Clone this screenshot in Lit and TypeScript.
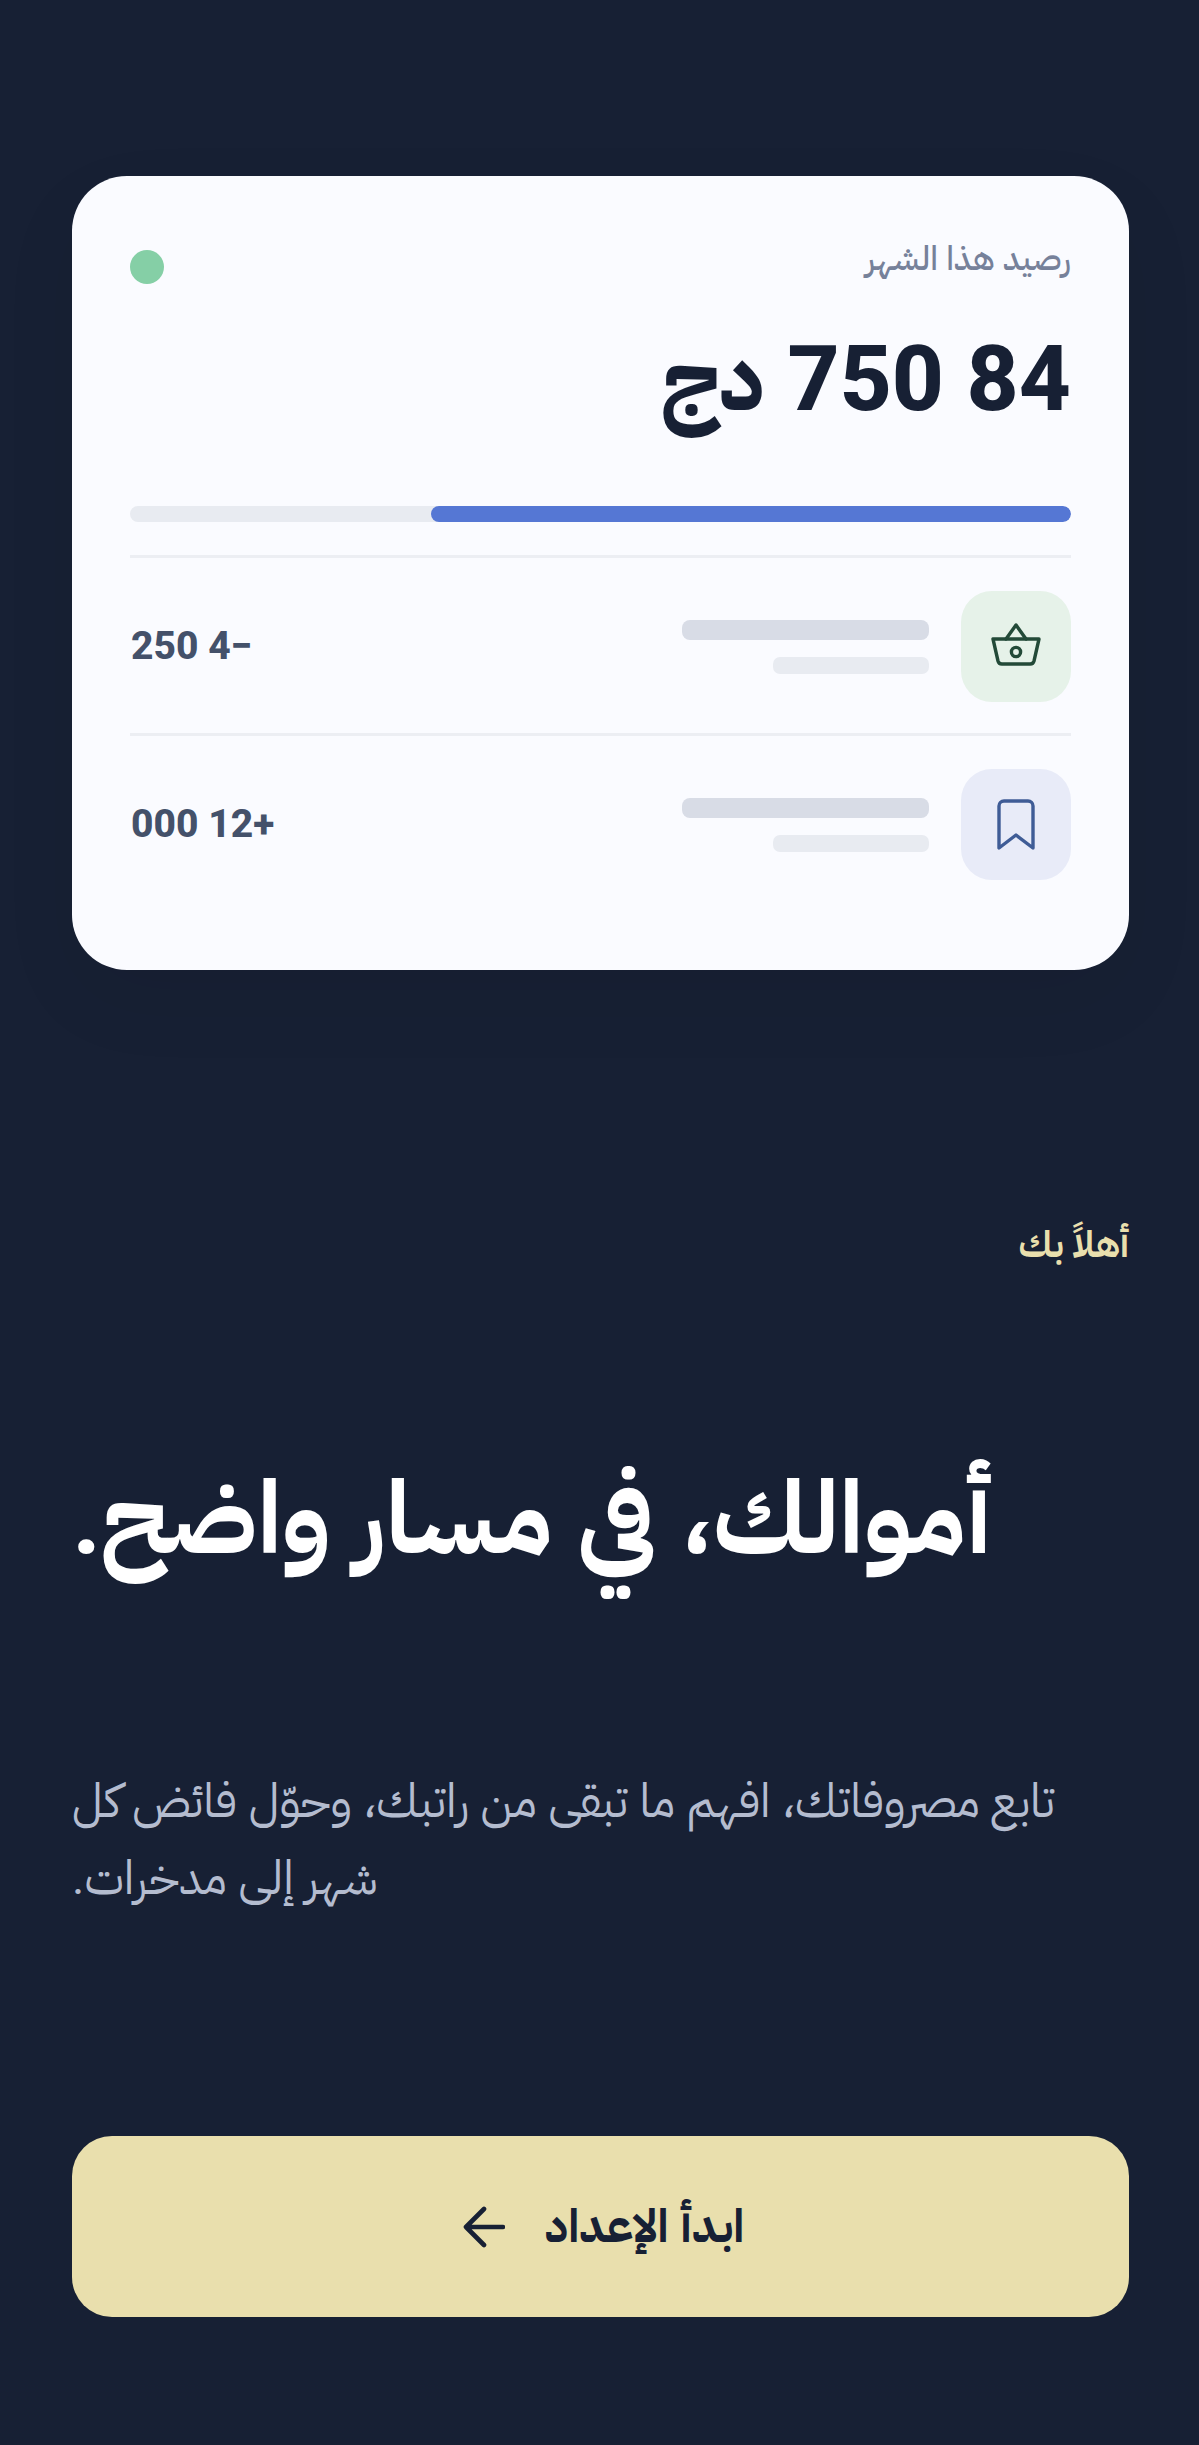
import { LitElement, html, css } from "lit";
import { customElement } from "lit/decorators.js";

@customElement("app-root")
export class AppRoot extends LitElement {
  static styles = css`
    :host { display: block; width: 1199px; height: 2445px; background: #172034; font-family: Roboto, "IBM Plex Sans Arabic", sans-serif; }
    .page { direction: rtl; box-sizing: border-box; height: 2445px; padding: 176px 70px 0 72px; display: flex; flex-direction: column; }
    .card { box-sizing: border-box; height: 794px; background: #fafbff; border-radius: 55px; padding: 58px 58px 0; box-shadow: 0 30px 80px rgba(0,0,0,.06); }
    .top { display: flex; justify-content: space-between; align-items: flex-start; height: 56px; }
    .label { font-size: 33.5px; font-weight: 500; line-height: 50px; color: #76819a; }
    .dot { width: 34px; height: 34px; border-radius: 50%; background: #85cfa6; margin-top: 16px; }
    .amount { margin-top: 34px; font-size: 90.5px; font-weight: 800; line-height: 110px; color: #172034; }
    .track { margin-top: 72px; height: 16px; border-radius: 8px; background: #e8ebf1; overflow: hidden; }
    .fill { height: 100%; width: 68%; border-radius: 8px; background: #5577d4; }
    .rule { height: 3px; background: #eceef3; margin-top: 33px; }
    .rule.flush { margin-top: 0; }
    .row { display: flex; align-items: center; padding: 33px 0 31px; }
    .ico { width: 110px; height: 111px; border-radius: 31px; display: flex; align-items: center; justify-content: center; flex: none; }
    .ico.green { background: #e6f2e9; color: #234a38; }
    .ico.blue { background: #e8ebf8; color: #3f5c96; }
    .bars { margin-right: 32px; width: 247px; display: flex; flex-direction: column; align-items: flex-start; gap: 17px; }
    .b1 { width: 247px; height: 20px; border-radius: 8px; background: #d8dce6; }
    .b2 { width: 156px; height: 17px; border-radius: 7px; background: #e8ebf1; }
    .val { margin-right: auto; font-size: 39px; font-weight: 800; line-height: 1; color: #44516a; padding-left: 1px; }
    .hello { margin-top: 251px; font-size: 36px; font-weight: 700; line-height: 48px; color: #e9dfad; }
    .title { margin: 180px 0 0; font-size: 101px; font-weight: 700; line-height: 140px; color: #fff; text-align: left; white-space: nowrap; }
    .para { margin: 173px 0 0; font-size: 47px; line-height: 77px; color: #b4bccf; text-align: left; }
    .btn { margin-top: 220px; height: 181px; border-radius: 40px; background: #e9dfad; color: #172034; display: flex; align-items: center; justify-content: center; gap: 40px; font-size: 46px; font-weight: 700; padding-left: 6px; }
  `;

  private row(cls: string, icon: unknown, val: string) {
    return html`<div class="row">
      <div class="ico ${cls}">${icon}</div>
      <div class="bars"><div class="b1"></div><div class="b2"></div></div>
      <div class="val">${val}</div>
    </div>`;
  }

  render() {
    const basket = html`<svg width="56" height="56" viewBox="0 0 56 56" fill="none" stroke="currentColor" stroke-width="3.4" stroke-linecap="round" stroke-linejoin="round"><path d="M5 20h46l-5 22a4 4 0 0 1-4 3H14a4 4 0 0 1-4-3z"/><path d="M18 20 28 6l10 14"/><circle cx="28" cy="33" r="4.6"/></svg>`;
    const mark = html`<svg width="56" height="56" viewBox="0 0 56 56" fill="none" stroke="currentColor" stroke-width="3.4" stroke-linecap="round" stroke-linejoin="round"><path d="M11 51V9a5 5 0 0 1 5-5h24a5 5 0 0 1 5 5v42L28 38z"/></svg>`;
    return html`<div class="page">
      <div class="card">
        <div class="top"><div class="label">رصيد هذا الشهر</div><div class="dot"></div></div>
        <div class="amount">84 750 دج</div>
        <div class="track"><div class="fill"></div></div>
        <div class="rule"></div>
        ${this.row("green", basket, "−4 250")}
        <div class="rule flush"></div>
        ${this.row("blue", mark, "+12 000")}
      </div>
      <div class="hello">أهلاً بك</div>
      <h1 class="title">أموالك، في مسار واضح.</h1>
      <p class="para">${"تابع مصروفاتك، افهم ما تبقى من راتبك، وحوّل فائض كل شهر إل\u200dى مدخرات."}</p>
      <div class="btn"><span>ابدأ الإعداد</span><svg width="42" height="42" viewBox="0 0 42 42" fill="none" stroke="currentColor" stroke-width="4.6" stroke-linecap="round" stroke-linejoin="round"><path d="M40 21H3M21 3 3 21l18 18"/></svg></div>
    </div>`;
  }
}
